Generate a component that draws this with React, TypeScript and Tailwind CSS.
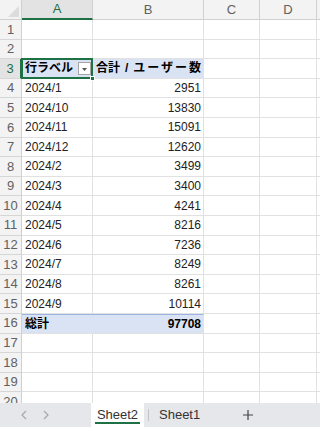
import React from 'react'

const rows: Array<{ label: string; value: string }> = [
  { label: '2024/1', value: '2951' },
  { label: '2024/10', value: '13830' },
  { label: '2024/11', value: '15091' },
  { label: '2024/12', value: '12620' },
  { label: '2024/2', value: '3499' },
  { label: '2024/3', value: '3400' },
  { label: '2024/4', value: '4241' },
  { label: '2024/5', value: '8216' },
  { label: '2024/6', value: '7236' },
  { label: '2024/7', value: '8249' },
  { label: '2024/8', value: '8261' },
  { label: '2024/9', value: '10114' },
]

const font = { fontFamily: '"Liberation Sans", "Noto Sans CJK JP", sans-serif' }

const RowHead = ({ n, active }: { n: number; active?: boolean }) => (
  <div
    className={
      active
        ? 'w-[22px] shrink-0 flex items-center justify-center bg-[#e3e3e3] text-[#1e6e42] text-[13px] border-r-2 border-r-[#1e7145] border-b border-b-[#d6d6d6]'
        : 'w-[22px] shrink-0 flex items-center justify-center bg-[#f3f3f3] text-[#616161] text-[13px] border-r border-r-[#d0d0d0] border-b border-b-[#d6d6d6]'
    }
  >
    {n}
  </div>
)

const Blank = () => (
  <>
    <div className="w-[56px] shrink-0 border-r border-b border-[#e1e1e1]" />
    <div className="w-[57px] shrink-0 border-r border-b border-[#e1e1e1]" />
    <div className="flex-1 border-b border-[#e1e1e1]" />
  </>
)

const EmptyRow = ({ n }: { n: number }) => (
  <div className="flex h-[19.6px]">
    <RowHead n={n} />
    <div className="w-[71px] shrink-0 border-r border-b border-[#e1e1e1]" />
    <div className="w-[111px] shrink-0 border-r border-b border-[#e1e1e1]" />
    <Blank />
  </div>
)

export default function App() {
  return (
    <div className="w-[320px] h-[430px] bg-white overflow-hidden flex flex-col text-[#222]" style={font}>
      <div className="h-[403px] overflow-hidden shrink-0">
        {/* column headers */}
        <div className="flex h-[20px]">
          <div className="w-[22px] shrink-0 bg-[#f3f3f3] border-r border-b border-[#d0d0d0] flex items-end justify-end p-[2px]">
            <svg width="11" height="11" viewBox="0 0 11 11">
              <polygon points="11,0 11,11 0,11" fill="#dcdcdc" />
            </svg>
          </div>
          <div className="w-[71px] shrink-0 bg-[#e3e3e3] border-r border-r-[#d0d0d0] border-b-2 border-b-[#1e7145] flex items-center justify-center text-[13px] text-[#1e6e42]">
            A
          </div>
          <div className="w-[111px] shrink-0 bg-[#f3f3f3] border-r border-b border-[#d0d0d0] flex items-center justify-center text-[13px] text-[#616161]">
            B
          </div>
          <div className="w-[56px] shrink-0 bg-[#f3f3f3] border-r border-b border-[#d0d0d0] flex items-center justify-center text-[13px] text-[#616161]">
            C
          </div>
          <div className="w-[57px] shrink-0 bg-[#f3f3f3] border-r border-b border-[#d0d0d0] flex items-center justify-center text-[13px] text-[#616161]">
            D
          </div>
          <div className="flex-1 bg-[#f3f3f3] border-b border-[#d0d0d0]" />
        </div>

        <EmptyRow n={1} />
        <EmptyRow n={2} />

        {/* pivot header row */}
        <div className="flex h-[19.6px]">
          <RowHead n={3} active />
          <div className="relative w-[71px] shrink-0 bg-[#dae3f3] border-r border-b border-[#e1e1e1] flex items-center pl-[3px] text-[12px] font-bold text-black">
            行ラベル
            <div className="absolute right-[1px] top-[3px] w-[13px] h-[13px] bg-white border border-[#a6a6a6] flex items-center justify-center">
              <svg width="7" height="6" viewBox="0 0 7 6">
                <polygon points="1,2 6,2 3.5,5" fill="#555" />
              </svg>
            </div>
            <div className="absolute -left-[1px] -top-[1px] -right-[1px] -bottom-[1px] border-2 border-[#1e7145] pointer-events-none" />
            <div className="absolute -right-[3px] -bottom-[3px] w-[5px] h-[5px] bg-[#1e7145] border border-white" />
          </div>
          <div className="w-[111px] shrink-0 bg-[#dae3f3] border-r border-b border-[#e1e1e1] flex items-center pl-[3px] text-[12px] font-bold text-black whitespace-nowrap overflow-hidden">
            <span>合計</span>
            <span className="px-[5px]">/</span>
            <span className="tracking-[2px]">ユーザー数</span>
          </div>
          <Blank />
        </div>

        {rows.map((r, i) => (
          <div key={r.label} className="flex h-[19.6px]">
            <RowHead n={i + 4} />
            <div className="w-[71px] shrink-0 border-r border-b border-[#e1e1e1] flex items-center pl-[3px] text-[12px]">
              {r.label}
            </div>
            <div className="w-[111px] shrink-0 border-r border-b border-[#e1e1e1] flex items-center justify-end pr-[2px] text-[12px]">
              {r.value}
            </div>
            <Blank />
          </div>
        ))}

        {/* grand total */}
        <div className="flex h-[19.6px]">
          <RowHead n={16} />
          <div className="w-[182px] shrink-0 bg-[#dae3f3] border-t border-t-[#9bb4e0] border-r border-r-[#e1e1e1] border-b border-b-[#e1e1e1] flex items-center justify-between px-[3px] pr-[2px] text-[12px] font-bold text-black">
            <span>総計</span>
            <span>97708</span>
          </div>
          <Blank />
        </div>

        <EmptyRow n={17} />
        <EmptyRow n={18} />
        <EmptyRow n={19} />
        <EmptyRow n={20} />
      </div>

      {/* sheet tabs */}
      <div className="flex h-[24px] bg-[#e6e7eb] shrink-0 items-stretch">
        <div className="w-[91px] flex items-center pl-[20px] gap-[14px] text-[#a8a8a8]">
          <svg width="8" height="10" viewBox="0 0 8 10">
            <polyline points="6,1 2,5 6,9" fill="none" stroke="#a8a8a8" strokeWidth="1.2" />
          </svg>
          <svg width="8" height="10" viewBox="0 0 8 10">
            <polyline points="2,1 6,5 2,9" fill="none" stroke="#a8a8a8" strokeWidth="1.2" />
          </svg>
        </div>
        <div className="w-[53px] bg-white flex flex-col items-center justify-center text-[13px] text-[#333]">
          <span className="leading-[15px] border-b-2 border-[#1e7145] px-[2px]">Sheet2</span>
        </div>
        <div className="flex items-center">
          <div className="w-px h-[12px] bg-[#c4c4c4] ml-[4px]" />
          <span className="text-[13px] text-[#333] ml-[10px]">Sheet1</span>
        </div>
        <div className="flex-1 flex items-center pl-[42px]">
          <svg width="12" height="12" viewBox="0 0 12 12">
            <path d="M6 1 V11 M1 6 H11" stroke="#444" strokeWidth="1.2" />
          </svg>
        </div>
      </div>
      <div className="flex-1 bg-white" />
    </div>
  )
}
